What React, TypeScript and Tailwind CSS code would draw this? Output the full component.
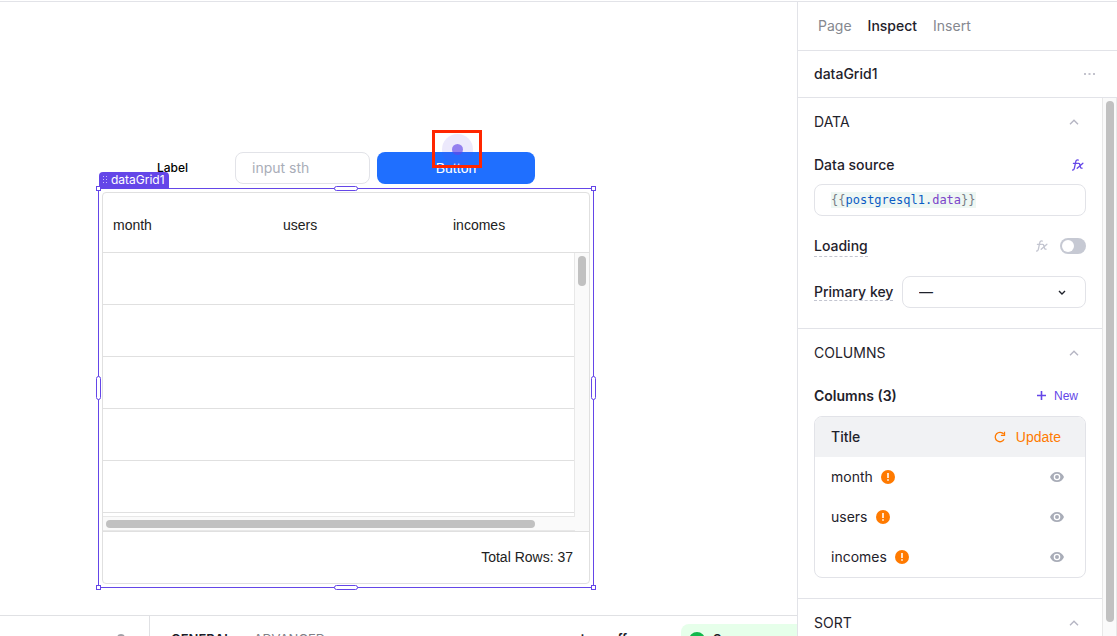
import { useState } from "react";
import type { ReactNode } from "react";
import clsx from "clsx";

const columns = ["month", "users", "incomes"];
const gridRows = [1, 2, 3, 4, 5];
const inspectorTabs = ["Page", "Inspect", "Insert"];

const ChevronUpIcon = () => (
  <svg width="10" height="6" viewBox="0 0 10 6" fill="none" stroke="#b5b5c3" strokeWidth="1.4">
    <path d="M1 5.2 5 1.2l4 4" />
  </svg>
);

const EyeIcon = () => (
  <svg width="14" height="10" viewBox="0 0 14 10" fill="#a9adb8">
    <path
      fillRule="evenodd"
      d="M7 0C3.8 0 1.1 2 0 5c1.1 3 3.8 5 7 5s5.9-2 7-5c-1.1-3-3.8-5-7-5Zm0 8.3a3.3 3.3 0 1 1 0-6.6 3.3 3.3 0 0 1 0 6.6ZM7 3a2 2 0 1 0 0 4 2 2 0 0 0 0-4Z"
    />
  </svg>
);

const WarningIcon = () => (
  <svg width="14" height="14" viewBox="0 0 14 14">
    <circle cx="7" cy="7" r="7" fill="#ff7a00" />
    <path d="M6.2 3h1.6v5H6.2zM6.2 9.2h1.6v1.6H6.2z" fill="#fff" />
  </svg>
);

const ReloadIcon = () => (
  <svg width="12" height="12" viewBox="0 0 12 12" fill="none" stroke="#ff7a00" strokeWidth="1.3">
    <path d="M10.1 8.2A4.7 4.7 0 1 1 9.7 3.2" />
    <path d="M10.5.8v3.6H6.9" />
  </svg>
);

const FxIcon = ({ className }: { className: string }) => (
  <svg
    width="12"
    height="12"
    viewBox="0 0 12 12"
    fill="none"
    strokeWidth="1.3"
    strokeLinecap="round"
    className={className}
  >
    <path d="M6.3 1.1C4.7.5 4 1.4 3.7 2.8L2.4 9.2c-.3 1.4-.8 2-1.8 1.8M1.4 4.3h4" />
    <path d="M6.2 4.4c1.2-.4 1.4.3 1.9 2.4s.8 2.7 2 2.3M10.9 4.3 5.2 9.3" />
  </svg>
);

// Square handles sit on the corners, pill handles in the middle of each side
const SelectionHandles = () => (
  <>
    <span className="absolute -top-[3px] -left-[3px] size-[5px] border border-[#6446e8] bg-white" />
    <span className="absolute -top-[3px] -right-[3px] size-[5px] border border-[#6446e8] bg-white" />
    <span className="absolute -bottom-[3px] -left-[3px] size-[5px] border border-[#6446e8] bg-white" />
    <span className="absolute -right-[3px] -bottom-[3px] size-[5px] border border-[#6446e8] bg-white" />
    <span className="absolute -top-[3px] left-1/2 h-[5px] w-6 -translate-x-1/2 rounded-full border border-[#6446e8] bg-white" />
    <span className="absolute -bottom-[3px] left-1/2 h-[5px] w-6 -translate-x-1/2 rounded-full border border-[#6446e8] bg-white" />
    <span className="absolute top-1/2 -left-[3px] h-6 w-[5px] -translate-y-1/2 rounded-full border border-[#6446e8] bg-white" />
    <span className="absolute top-1/2 -right-[3px] h-6 w-[5px] -translate-y-1/2 rounded-full border border-[#6446e8] bg-white" />
  </>
);

const DataGrid = () => (
  <div className="overflow-hidden rounded-sm border border-[#e0e0e0] font-['Liberation_Sans',sans-serif] text-sm text-[#212121]">
    <div className="relative h-[338px] overflow-hidden">
      <table className="w-full table-fixed border-collapse">
        <colgroup>
          <col className="w-[170px]" />
          <col className="w-[170px]" />
          <col />
        </colgroup>
        <thead>
          <tr className="h-[59px] border-b border-[#e0e0e0]">
            {columns.map((name) => (
              <th key={name} className="px-2.5 pt-1.5 text-left font-normal">
                {name}
              </th>
            ))}
          </tr>
        </thead>
        <tbody>
          {gridRows.map((row) => (
            <tr key={row} className="h-[52px] border-b border-[#e0e0e0]">
              {columns.map((name) => (
                <td key={name} />
              ))}
            </tr>
          ))}
        </tbody>
      </table>
      {/* Scrollbars */}
      <div className="absolute top-[60px] right-0 bottom-0 w-[15px] border-l border-[#e8e8e8] bg-[#fafafa] px-[3px] pt-[3px]">
        <div className="h-[30px] w-2 rounded-full bg-[#c1c1c1]" />
      </div>
      <div className="absolute right-3.5 bottom-0 left-0 h-[15px] border-t border-b border-[#e8e8e8] bg-[#fafafa] px-[3px] pt-[3px]">
        <div className="h-2 w-[92%] rounded-full bg-[#c1c1c1]" />
      </div>
    </div>
    <div className="flex h-[52px] items-center justify-end border-t border-[#e0e0e0] px-4 pb-0.5">
      Total Rows: 37
    </div>
  </div>
);

const Canvas = () => (
  <div className="min-h-0 flex-1 overflow-hidden pt-[150px]">
    <div className="ml-[157px] flex h-8 items-center">
      <label htmlFor="sth" className="w-[78px] text-xs font-medium text-black">
        Label
      </label>
      <input
        id="sth"
        placeholder="input sth"
        className="h-8 w-[135px] rounded-lg border border-[#e2e3e8] px-4 pb-0.5 text-sm placeholder:text-[#a9adb8]"
      />
      <div className="relative ml-[7px]">
        <button className="block h-8 w-[158px] rounded-lg bg-[#1f6fff] font-['Liberation_Sans',sans-serif] text-sm text-white">
          Button
        </button>
        {/* Click marker */}
        <div className="absolute -top-[22px] left-[55px] flex h-[38px] w-[50px] items-center justify-center border-[3px] border-[#ff2600]">
          <span className="flex size-[31px] items-center justify-center rounded-full bg-[#6446e8]/12">
            <span className="size-[11px] rounded-full bg-[#6446e8]/65" />
          </span>
        </div>
      </div>
    </div>
    <div className="relative mt-1 ml-[98px] w-[496px] border border-[#6446e8] p-[3px]">
      <span className="absolute bottom-full left-0 flex h-[17px] items-center gap-1 rounded-t bg-[#6446e8] px-1 pb-0.5 text-xs text-white">
        <svg width="4" height="8" viewBox="0 0 4 8" fill="#c9bff8">
          <path d="M0 0h1v1H0zM3 0h1v1H3zM0 3h1v1H0zM3 3h1v1H3zM0 6h1v1H0zM3 6h1v1H3z" />
        </svg>
        dataGrid1
      </span>
      <DataGrid />
      <SelectionHandles />
    </div>
  </div>
);

const QueryPanel = () => (
  <div className="flex h-[21px] shrink-0 overflow-hidden border-t border-[#e0e1e4] text-[13px] whitespace-nowrap">
    <div className="flex w-[150px] shrink-0 justify-end border-r border-[#e0e1e4] pt-[18px] pr-6">
      <span className="size-2 rounded-full border-2 border-[#a0a0a6]" />
    </div>
    <div className="flex flex-1 items-start pl-[21px]">
      <div className="flex flex-1 gap-[22px] pt-3.5">
        <span className="font-semibold text-[#1c1c28]">GENERAL</span>
        <span className="text-[#808087]">ADVANCED</span>
      </div>
      <span className="mr-[54px] pt-3.5 font-semibold text-[#1c1c28]">turn off</span>
      <div className="mt-2 flex h-8 w-[116px] items-center gap-2 rounded-tl-lg bg-[#e6ffea] pl-2 font-semibold text-[#1c1c28]">
        <span className="size-4 rounded-full bg-[#12b84b]" />
        Success
      </div>
    </div>
  </div>
);

const Section = ({ title, children }: { title: string; children?: ReactNode }) => (
  <section className="border-b border-[#e2e3e8] px-4 pb-5">
    <button className="flex h-12 w-full items-center justify-between pr-[7px] text-left">
      <h2>{title}</h2>
      <ChevronUpIcon />
    </button>
    {children}
  </section>
);

const Inspector = () => {
  const [activeTab, setActiveTab] = useState("Inspect");
  const [loading, setLoading] = useState(false);

  return (
    <aside className="flex w-80 shrink-0 flex-col border-l border-[#e2e3e8] text-sm text-[#1f222b]">
      <nav className="flex h-[49px] shrink-0 items-center gap-4 border-b border-[#e2e3e8] px-5">
        {inspectorTabs.map((tab) => (
          <button
            key={tab}
            onClick={() => setActiveTab(tab)}
            className={clsx(tab === activeTab ? "font-medium" : "text-[#85888f]")}
          >
            {tab}
          </button>
        ))}
      </nav>
      <div className="flex h-[47px] shrink-0 items-center justify-between border-b border-[#e2e3e8] pr-[22px] pl-4 font-medium">
        dataGrid1
        <button aria-label="More">
          <svg width="11" height="2" viewBox="0 0 11 2" fill="#c3c3cd">
            <path d="M0 0h2v2H0zM4.500 0h2v2h-2zM9 0h2v2H9z" />
          </svg>
        </button>
      </div>

      <div className="flex min-h-0 flex-1">
        <div className="min-w-0 flex-1 overflow-hidden">
          <Section title="DATA">
            <div className="flex h-[38px] items-center justify-between pr-0.5">
              <label htmlFor="source" className="font-medium">
                Data source
              </label>
              <FxIcon className="stroke-[#6446e8]" />
            </div>
            <div
              id="source"
              className="flex h-8 items-center rounded-lg border border-[#e2e3e8] px-4 font-['DejaVu_Sans_Mono',monospace] text-xs"
            >
              <code className="bg-[#eef7f3] font-['DejaVu_Sans_Mono',monospace] text-[#777d86]">
                {"{{"}
                <span className="text-[#0b5cc4]">postgresql1.</span>
                <span className="text-[#7b45c9]">data</span>
                {"}}"}
              </code>
            </div>
            <div className="flex h-[60px] items-center">
              <label htmlFor="loading" className="flex-1 font-medium">
                <span className="border-b border-dashed border-[#c3c5d0] pb-0.5">Loading</span>
              </label>
              <FxIcon className="mr-3 stroke-[#c3c5d0]" />
              <input
                id="loading"
                type="checkbox"
                role="switch"
                checked={loading}
                onChange={() => setLoading(!loading)}
                className="h-4 w-[26px] appearance-none rounded-full bg-[#c6c9d3] p-0.5 before:block before:size-3 before:rounded-full before:bg-white checked:bg-[#6446e8] checked:before:translate-x-2.5"
              />
            </div>
            <div className="flex items-center justify-between">
              <label htmlFor="primary-key" className="font-medium">
                <span className="border-b border-dashed border-[#c3c5d0]">Primary key</span>
              </label>
              <div className="relative">
                <select
                  id="primary-key"
                  className="block h-8 w-[184px] appearance-none rounded-lg border border-[#e2e3e8] px-4"
                >
                  <option>—</option>
                </select>
                <svg
                  className="pointer-events-none absolute top-3.5 right-5"
                  width="8"
                  height="6"
                  viewBox="0 0 8 6"
                  fill="none"
                  stroke="#1f222b"
                  strokeWidth="1.4"
                >
                  <path d="m1 1 3 3 3-3" />
                </svg>
              </div>
            </div>
          </Section>

          <Section title="COLUMNS">
            <div className="flex h-[39px] items-center justify-between pr-2 pb-0.5">
              <h3 className="font-semibold">Columns (3)</h3>
              <button className="flex items-center gap-2 font-['Liberation_Sans',sans-serif] text-xs text-[#6446e8]">
                <svg width="9" height="9" viewBox="0 0 9 9" stroke="#6446e8" strokeWidth="1.6">
                  <path d="M4.500 0v9M0 4.500h9" />
                </svg>
                New
              </button>
            </div>
            <div className="overflow-hidden rounded-lg border border-[#e2e3e8]">
              <div className="flex h-10 items-center justify-between bg-[#f1f2f4] pr-6 pl-4">
                <span className="font-medium">Title</span>
                <button className="flex items-center gap-2.5 font-['Liberation_Sans',sans-serif] text-[#ff7a00]">
                  <ReloadIcon />
                  Update
                </button>
              </div>
              <ul>
                {columns.map((name) => (
                  <li key={name} className="flex h-10 items-center gap-2 pr-[21px] pl-4">
                    {name}
                    <WarningIcon />
                    <button aria-label={`Hide ${name}`} className="ml-auto">
                      <EyeIcon />
                    </button>
                  </li>
                ))}
              </ul>
            </div>
          </Section>

          <Section title="SORT" />
        </div>
        <div className="w-[15px] shrink-0 border-x border-[#e8e8e8] bg-[#fafafa] px-[3px] pt-[3px] pb-3.5">
          <div className="h-full w-2 rounded-full bg-[#c1c1c1]" />
        </div>
      </div>
    </aside>
  );
};

export default function App() {
  return (
    <div className="h-screen overflow-hidden bg-white pt-px font-['Inter',sans-serif]">
      <div className="flex h-full border-t border-[#e2e3e8]">
        <main className="flex min-w-0 flex-1 flex-col">
          <Canvas />
          <QueryPanel />
        </main>
        <Inspector />
      </div>
    </div>
  );
}
